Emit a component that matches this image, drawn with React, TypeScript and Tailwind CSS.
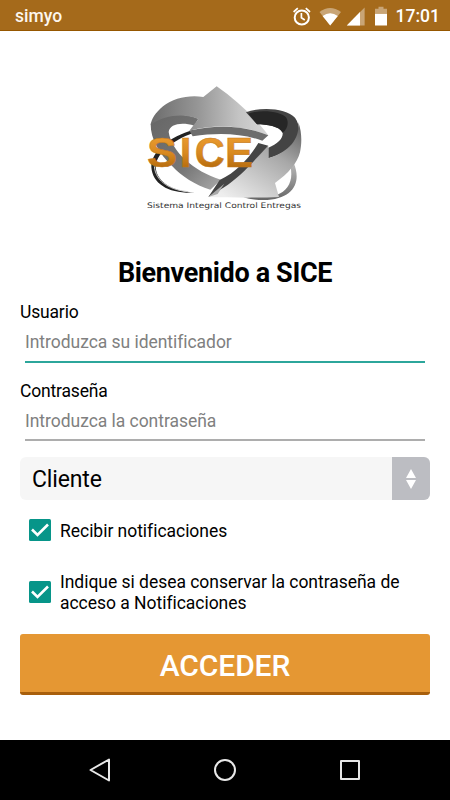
import React, { useState } from 'react';

const StatusBar: React.FC = () => (
  <header className="h-[31px] shrink-0 flex items-center justify-between pl-[15px] pr-[10px] pt-1 bg-[#a56a1b] border-b border-[#965700] text-white">
    <span className="text-[17.5px] leading-none font-medium text-[#fcf6ee]">simyo</span>
    <div className="flex items-center">
      <svg className="w-[100px] h-[26px] mr-[6px]" viewBox="290 3.5 100 26" fill="none">
        {/* alarm */}
        <circle cx="301.8" cy="17" r="7.1" stroke="#fff" strokeWidth="2" />
        <path d="M301.4 12.500v4.800l3.400 2.200M293.600 11.500l4.200-3.800M310 11.500l-4.200-3.800" stroke="#fff" strokeWidth="1.7" />
        {/* wifi */}
        <path d="M319.5 11.500Q330 3.300 341 11.500L330.200 25Z" fill="#fff" fillOpacity=".4" />
        <path d="M322.600 15.400Q330.200 10 337.800 15.400L330.200 25Z" fill="#fff" />
        {/* signal */}
        <path d="M364.600 7v18h-17.800z" fill="#fff" fillOpacity=".4" />
        <path d="M360 11.600v13.400h-13.200z" fill="#fff" />
        {/* battery */}
        <path d="M375 8.200h3.500v-1.900h5v1.900h3.500v5.100h-12z" fill="#fff" fillOpacity=".4" />
        <path d="M375 13.300h12v11.700h-12z" fill="#fff" />
      </svg>
      <span className="text-[17.5px] leading-none font-medium">17:01</span>
    </div>
  </header>
);

const Logo: React.FC = () => (
  <svg className="w-[160px] h-[130px]" viewBox="0 0 480 390">
    <defs>
      <linearGradient id="arrow" x1="0" y1=".6" x2="1" y2=".6">
        <stop offset="0" stopColor="#6c6c6c" />
        <stop offset=".4" stopColor="#969696" />
        <stop offset=".75" stopColor="#c4c4c4" />
        <stop offset="1" stopColor="#d6d6d6" />
      </linearGradient>
      <linearGradient id="ribbon" x1="1" y1="0" x2=".2" y2="1">
        <stop offset="0" stopColor="#5a5a5a" />
        <stop offset=".4" stopColor="#a8a8a8" />
        <stop offset="1" stopColor="#eee" />
      </linearGradient>
      <linearGradient id="strap" x1="0" y1="0" x2="1" y2="1">
        <stop offset="0" stopColor="#666" />
        <stop offset=".6" stopColor="#777" />
        <stop offset="1" stopColor="#aaa" />
      </linearGradient>
      <linearGradient id="ring" x1="0" y1="0" x2="0" y2="1">
        <stop offset="0" stopColor="#bbb" />
        <stop offset="1" stopColor="#666" />
      </linearGradient>
      <linearGradient id="gold" x1="0" y1="0" x2="0" y2="1">
        <stop offset="0" stopColor="#f3a337" />
        <stop offset=".5" stopColor="#d98a20" />
        <stop offset="1" stopColor="#a45c05" />
      </linearGradient>
    </defs>

    {/* thin orbit behind the arrows */}
    <path d="M145 141C75 160 18 205 19 252C22 305 75 333 150 329C85 326 34 298 32 252C32 215 80 172 145 150Z" fill="#222" />
    <path d="M28 250C32 298 80 322 130 326" fill="none" stroke="#ccc" strokeWidth="3" />
    <path d="M446 240C470 295 448 350 355 351C335 351 310 348 295 343L395 335C430 325 446 290 436 250Z" fill="url(#ring)" />
    <path d="M402 310C425 290 434 270 436 252C443 285 430 315 398 328Z" fill="#fff" />

    {/* left arrow */}
    <path d="M17 122C55 92 115 88 160 107L148 128C108 116 74 124 71 147C80 205 145 265 228 290L196 320C150 306 110 280 82 250C42 210 17 170 17 122Z" fill="url(#strap)" />
    <path d="M215 10L175 42C130 35 85 46 54 70C30 90 20 108 17 125C60 94 120 90 160 108L133 143C215 122 300 128 370 157C330 103 275 52 215 10Z" fill="url(#arrow)" />
    <path d="M133 143C215 124 300 128 370 157L352 173C290 151 220 148 143 160Z" fill="#6d6d6d" />

    {/* right arrow */}
    <path d="M303 88C350 70 425 76 450 104C468 130 466 165 445 187C425 205 400 218 370 226V194C398 183 415 166 413 149C405 130 365 124 336 124Z" fill="#444" />
    <path d="M310 92C350 78 410 86 424 104C432 118 428 138 413 149C403 130 365 124 336 124Z" fill="#262626" />
    <path d="M460 118C472 150 470 185 465 208C457 240 430 272 390 300L402 342C335 345 255 344 190 342L228 307C285 272 335 225 370 189V226C424 208 465 175 460 118Z" fill="url(#ribbon)" />
    <path d="M340 180L370 188C330 228 290 280 235 314L190 342L224 291C275 268 315 222 340 180Z" fill="#454545" />
    <path d="M190 342L238 302L218 333Z" fill="#aaa" />

    <g fontFamily="'Liberation Sans', sans-serif" fontWeight="700" fontSize="126" stroke="#c27a1c" strokeWidth="1.500" fill="url(#gold)">
      <text x="6" y="252" textLength="90" lengthAdjust="spacingAndGlyphs">S</text>
      <text x="104" y="252">I</text>
      <text x="149" y="252" textLength="90" lengthAdjust="spacingAndGlyphs">C</text>
      <text x="240" y="252">E</text>
    </g>
    <text x="6" y="375" textLength="462" lengthAdjust="spacingAndGlyphs" fontFamily="'DejaVu Sans', sans-serif" fontSize="23" fill="#333">
      Sistema Integral Control Entregas
    </text>
  </svg>
);

interface FieldProps {
  label: string;
  placeholder: string;
  type: string;
  className: string;
}

const Field: React.FC<FieldProps> = ({ label, placeholder, type, className }) => (
  <label className="block h-[79px]">
    <span className="block h-[22px] text-[17.5px] leading-[23px] tracking-[-0.17px] text-black">{label}</span>
    <input
      type={type}
      placeholder={placeholder}
      className={`block mx-[5px] w-[400px] border-b-2 text-[17.5px] tracking-[-0.04px] text-black placeholder:text-[#808080] outline-none ${className}`}
    />
  </label>
);

interface CheckRowProps {
  label: string;
  className: string;
}

const CheckRow: React.FC<CheckRowProps> = ({ label, className }) => {
  const [checked, setChecked] = useState(true);

  return (
    <button type="button" onClick={() => setChecked(!checked)} className={`flex items-center pl-[9px] text-left ${className}`}>
      <svg className="w-[22px] h-[22px] shrink-0 mr-[9px]" viewBox="0 0 22 22">
        <rect width="22" height="22" rx="1.500" fill={checked ? '#079589' : '#757575'} />
        {checked && <path d="M3 10.500l5.500 5.500L19 5.500" fill="none" stroke="#fff" strokeWidth="2.600" />}
      </svg>
      <span className="pt-0.5 text-[17.5px] leading-[20.5px] tracking-[-0.03px] text-black">{label}</span>
    </button>
  );
};

const NavBar: React.FC = () => (
  <nav className="h-[60px] shrink-0 bg-black flex items-center justify-center gap-[101px]">
    {[
      <path key="back" d="M2.500 12L21 1.500v21z" />,
      <circle key="home" cx="12" cy="12" r="10" />,
      <rect key="recents" x="3" y="3" width="18" height="18" />
    ].map((shape, idx) => (
      <svg key={idx} className="w-6 h-6" viewBox="0 0 24 24" fill="none" stroke="#e8e8e8" strokeWidth="2" strokeLinejoin="round">
        {shape}
      </svg>
    ))}
  </nav>
);

const App: React.FC = () => {
  return (
    <div className="w-[450px] h-[800px] flex flex-col bg-white overflow-hidden font-['Roboto',sans-serif]">
      <StatusBar />

      <main className="flex-1 flex flex-col px-5">
        <div className="pt-[52px] h-[217px] flex justify-center">
          <Logo />
        </div>
        <h1 className="h-[53px] pt-2 text-center text-[27px] leading-[34px] tracking-[-0.35px] font-bold text-black">Bienvenido a SICE</h1>

        <Field label="Usuario" placeholder="Introduzca su identificador" type="text" className="h-[40px] pb-[1px] border-[#2ca69b]" />
        <Field label="Contraseña" placeholder="Introduzca la contraseña" type="password" className="h-[39px] border-[#adadad]" />

        {/* User type selector */}
        <button type="button" className="mt-[-2px] h-[43px] shrink-0 flex rounded-md overflow-hidden bg-[#f6f6f6] text-left">
          <span className="flex-1 pl-[12px] text-[23px] leading-[46px] tracking-[-0.15px] text-black">Cliente</span>
          <span className="w-[38px] h-full bg-[#bcbdc2] flex items-center justify-center">
            <svg className="w-[10px] h-5" viewBox="0 0 10 20" fill="#fff">
              <path d="M5 0l5 9H0zM0 11h10l-5 9z" />
            </svg>
          </span>
        </button>

        <CheckRow label="Recibir notificaciones" className="mt-[19px] h-[22px]" />
        <CheckRow label="Indique si desea conservar la contraseña de acceso a Notificaciones" className="mt-[29px] h-[43px]" />

        <button
          type="button"
          className="mt-[21px] h-[61px] shrink-0 rounded-[3px] bg-[#e59733] border-b-[3px] border-[#a85f0c] pt-1.5 text-white text-[30px] leading-none tracking-[-0.1px] font-medium"
        >
          ACCEDER
        </button>
      </main>

      <NavBar />
    </div>
  );
};

export default App;
